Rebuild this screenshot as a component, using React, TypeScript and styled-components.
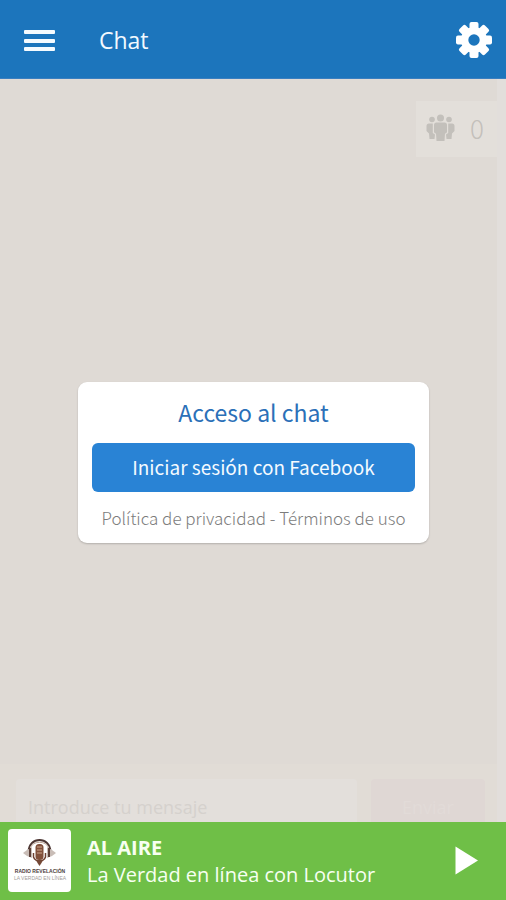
import React from "react";
import styled, { createGlobalStyle } from "styled-components";

const GlobalStyle = createGlobalStyle`
  *, *::before, *::after { box-sizing: border-box; }
  body { margin: 0; background: #dfdad5; }
  button, input { font: inherit; margin: 0; border: 0; }
`;

const uiFont = `"Open Sans", "Noto Sans", sans-serif`;
const cardFont = `"Noto Sans CJK SC", "Noto Sans", sans-serif`;

const Page = styled.div`
  display: flex;
  flex-direction: column;
  height: 100vh;
  min-height: 480px;
  font-family: ${uiFont};
`;

const Header = styled.header`
  display: flex;
  align-items: center;
  flex: none;
  height: 79px;
  padding: 2px 14px 0 24px;
  background: #1c75bc;
  border-bottom: 1px solid #3a7fc0;
  color: #f2f9ff;
`;

const IconButton = styled.button`
  display: flex;
  flex: none;
  padding: 0;
  background: none;
  color: #fff;
  cursor: pointer;
`;

const Title = styled.h1`
  flex: 1;
  margin: 0 0 0 43px;
  font-size: 23px;
  line-height: 32px;
  font-weight: 400;
`;

const Main = styled.main`
  position: relative;
  display: flex;
  flex: 1;
  min-height: 0;
  overflow: hidden;
  background: #dfdad5;
`;

const ChatColumn = styled.section`
  display: flex;
  flex: 1;
  flex-direction: column;
  min-width: 0;
`;

const ScrollTrack = styled.div`
  flex: none;
  width: 9px;
  background: #e2dedb;
`;

const Messages = styled.div`
  display: flex;
  flex: 1;
  align-items: flex-start;
  justify-content: flex-end;
  padding-top: 22px;
`;

const UserCount = styled.div`
  display: flex;
  align-items: center;
  gap: 15px;
  height: 56px;
  padding: 0 13px 2px 10px;
  background: #e3dfda;
  color: #c3c0bb;
  font-family: ${cardFont};
  font-size: 26px;
  font-weight: 300;
  line-height: 32px;
`;

const Composer = styled.form`
  display: flex;
  flex: none;
  gap: 14px;
  height: 58px;
  padding: 15px 12px 0 16px;
  background: #e1dcd6;
`;

const MessageInput = styled.input`
  flex: 1;
  min-width: 0;
  height: 56px;
  padding: 0 12px;
  border-radius: 4px;
  background: #e3dfdb;
  font-size: 18px;
  &::placeholder { color: #d5d1cd; opacity: 1; }
`;

const SendButton = styled.button`
  flex: none;
  width: 114px;
  height: 56px;
  padding: 0;
  border-radius: 4px;
  background: #dfd7d4;
  color: #e2dbd8;
  font-size: 18px;
`;

const Overlay = styled.div`
  position: absolute;
  inset: 0;
  display: flex;
  align-items: center;
  justify-content: center;
  padding: 24px 77px 0 78px;
`;

const Card = styled.section`
  display: flex;
  flex: 1;
  flex-direction: column;
  max-width: 420px;
  padding: 14px 14px 12px;
  border-radius: 9px;
  background: #fff;
  box-shadow: 0 1px 2px rgba(0, 0, 0, 0.2);
  font-family: ${cardFont};
  text-align: center;
`;

const CardTitle = styled.h2`
  margin: 0 0 15px;
  color: #2b70b8;
  font-size: 23px;
  font-weight: 400;
  line-height: 32px;
`;

const LoginButton = styled.button`
  height: 49px;
  padding: 0 0 2px;
  border-radius: 6px;
  background: #2983d5;
  color: #f4faff;
  font-size: 19px;
  line-height: 24px;
  white-space: nowrap;
  cursor: pointer;
`;

const Legal = styled.p`
  margin: 13px 0 0;
  color: #7c7c7c;
  font-size: 17px;
  font-weight: 300;
  line-height: 26px;
  white-space: nowrap;
`;

const LegalLink = styled.a`
  color: inherit;
  text-decoration: none;
`;

const Player = styled.footer`
  display: flex;
  align-items: center;
  flex: none;
  gap: 16px;
  height: 78px;
  padding: 0 28px 2px 8px;
  background: #6fbf47;
  color: #f7fff2;
`;

const Cover = styled.div`
  flex: none;
  width: 63px;
  height: 63px;
  border-radius: 4px;
  background: #fff;
  overflow: hidden;
`;

const TrackInfo = styled.div`
  flex: 1;
  min-width: 0;
  padding-top: 2px;
  font-size: 20px;
  line-height: 27px;
  white-space: nowrap;
`;

const OnAir = styled.strong`
  display: block;
  font-weight: 700;
`;

const MenuIcon = () => (
  <svg width="32" height="24" viewBox="0 0 32 24" fill="#f5fbff" aria-hidden="true">
    <rect y="2" width="31" height="4" rx="1" />
    <rect y="11" width="31" height="4" rx="1" />
    <rect y="19" width="31" height="4" rx="1" />
  </svg>
);

const GearIcon = () => (
  <svg width="36" height="36" viewBox="0 0 36 36" aria-hidden="true">
    <g fill="#fff">
      {[0, 45, 90, 135].map((a) => (
        <rect
          key={a}
          x="13.500"
          y="0"
          width="9"
          height="36"
          rx="2"
          transform={`rotate(${a} 18 18)`}
        />
      ))}
      <circle cx="18" cy="18" r="13" />
    </g>
    <circle cx="18" cy="18" r="5.700" fill="#1c75bc" />
  </svg>
);

const PeopleIcon = () => (
  <svg width="29" height="28" viewBox="0 0 29 28" fill="currentColor" aria-hidden="true">
    <circle cx="14.500" cy="4" r="3.500" />
    <circle cx="6" cy="5.500" r="2.800" />
    <circle cx="23" cy="5.500" r="2.800" />
    <path d="M10.500 8.500H18.500Q21 8.500 21 11V18Q20.500 19.500 19 19.500L18.500 27H10.500L10 19.500Q8.500 19.500 8 18V11Q8 8.500 10.500 8.500Z" />
    <path d="M3 9.500H6.800V19L9 20.500L8.500 25H3.500L3 19.500L0.500 17V12Q.5 9.500 3 9.500Z" />
    <path d="M26 9.500H22.200V19L20 20.500L20.500 25H25.500L26 19.500L28.500 17V12Q28.500 9.500 26 9.500Z" />
  </svg>
);

const PlayIcon = () => (
  <svg width="23" height="29" viewBox="0 0 23 29" fill="#fff" aria-hidden="true">
    <path d="M0.500 0.500L23 14.500L0.500 28.500Z" />
  </svg>
);

const CoverArt = () => (
  <svg width="63" height="63" viewBox="0 0 63 63" role="img" aria-label="Radio Revelación">
    <path d="M20.500 23C20.500 7 42.500 7 42.500 23" fill="none" stroke="#4b3532" strokeWidth="1.800" />
    <path d="M22 20C24 11 39 11 41 20" fill="none" stroke="#b69b8c" strokeWidth="1" />
    <path d="M24 18V29L19 27L15 24L19 21Z" fill="#c9bdb7" />
    <path d="M39 18V29L44 27L48 24L44 21Z" fill="#c9bdb7" />
    <path d="M22 19V28M41 19V28" stroke="#5c4038" strokeWidth="2" />
    <rect x="27.500" y="15" width="8" height="16" rx="3.500" fill="#81503b" />
    <path d="M29 18H34M29 21H34M29 24H34" stroke="#cda58d" />
    <path d="M25.500 24V28Q27 32 31.500 32Q36 32 37.500 28V24" fill="none" stroke="#6d4032" strokeWidth="1.500" />
    <path d="M28 31H35L33.500 34L31.500 37L29.500 34Z" fill="#744836" />
    <text x="32" y="44" textAnchor="middle" fontFamily="Liberation Sans" fontSize="5" fontWeight="700" fill="#4c403d">
      RADIO REVELACIÓN
    </text>
    <text x="32" y="51" textAnchor="middle" fontFamily="Liberation Sans" fontSize="5" fill="#a39d9a">
      LA VERDAD EN LÍNEA
    </text>
  </svg>
);

export default function App() {
  return (
    <>
      <GlobalStyle />
      <Page>
        <Header>
          <IconButton type="button" aria-label="Menú">
            <MenuIcon />
          </IconButton>
          <Title>Chat</Title>
          <IconButton type="button" aria-label="Ajustes">
            <GearIcon />
          </IconButton>
        </Header>
        <Main>
          <ChatColumn>
            <Messages>
              <UserCount>
                <PeopleIcon />
                <span>0</span>
              </UserCount>
            </Messages>
            <Composer onSubmit={(e) => e.preventDefault()}>
              <MessageInput aria-label="Introduce tu mensaje" placeholder="Introduce tu mensaje" />
              <SendButton type="submit">Enviar</SendButton>
            </Composer>
          </ChatColumn>
          <ScrollTrack />
          <Overlay>
            <Card>
              <CardTitle>Acceso al chat</CardTitle>
              <LoginButton type="button">Iniciar sesión con Facebook</LoginButton>
              <Legal>
                <LegalLink href="#privacidad">Política de privacidad</LegalLink>
                {" - "}
                <LegalLink href="#terminos">Términos de uso</LegalLink>
              </Legal>
            </Card>
          </Overlay>
        </Main>
        <Player>
          <Cover>
            <CoverArt />
          </Cover>
          <TrackInfo>
            <OnAir>AL AIRE</OnAir>
            La Verdad en línea con Locutor
          </TrackInfo>
          <IconButton type="button" aria-label="Reproducir">
            <PlayIcon />
          </IconButton>
        </Player>
      </Page>
    </>
  );
}
